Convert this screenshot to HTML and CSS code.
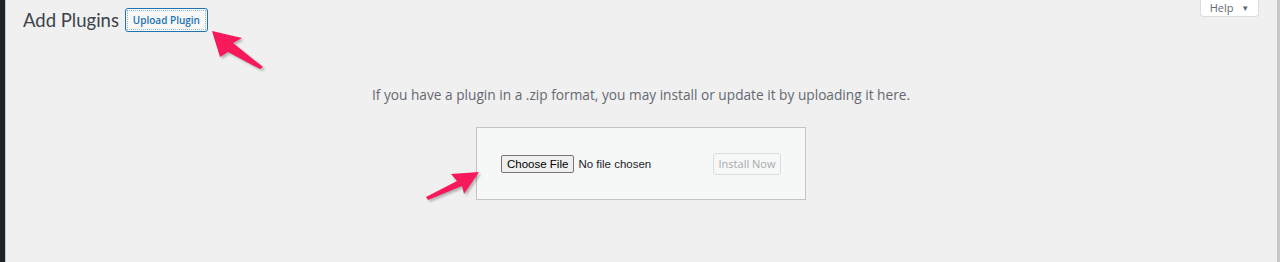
FILE: index.html
```html
<!DOCTYPE html>
<html lang="en">
<head>
    <meta charset="UTF-8">
    <meta name="viewport" content="width=device-width, initial-scale=1.0">
    <title>Add Plugins</title>
    <link rel="stylesheet" href="styles.css">
</head>
<body>

<div class="frame">
    <div class="sidebar"></div>

    <div class="main">
        <div class="top-bar">
            <div class="title-row">
                <h1>Add Plugins</h1>
                <button class="upload-btn">Upload Plugin</button>
            </div>
            <button class="help-tab">Help <span class="caret">&#9660;</span></button>
        </div>

        <div class="upload-plugin">
            <p class="install-help">If you have a plugin in a .zip format, you may install or update it by uploading it here.</p>
            <form class="upload-form">
                <input type="file" class="file-input">
                <button type="button" class="install-btn" disabled>Install Now</button>
            </form>
        </div>

        <!-- annotation arrows -->
        <svg class="arrow arrow-one" width="70" height="50" viewBox="0 0 70 50">
            <polygon class="arrow-shadow" points="2,1 32,8 23,13 53,37 50,39 18,22 10,27" transform="translate(2,2)"/>
            <polygon class="arrow-fill" points="2,1 32,8 23,13 53,37 50,39 18,22 10,27"/>
        </svg>
        <svg class="arrow arrow-two" width="60" height="36" viewBox="0 0 60 36">
            <polygon class="arrow-shadow" points="55,2 40,24 38,16 4,30 2,27 33,11 27,4" transform="translate(2,2)"/>
            <polygon class="arrow-fill" points="55,2 40,24 38,16 4,30 2,27 33,11 27,4"/>
        </svg>
    </div>

    <div class="scroll-edge"></div>
</div>

</body>
</html>
```

FILE: styles.css
```css
body {
    margin: 0;
    padding: 0;
    background-color: #f0f0f1;
    font-family: "Open Sans", "Noto Sans", sans-serif;
    color: #3c434a;
    overflow: hidden;
}
.frame {
    display: flex;
    height: 262px;
}
.sidebar {
    width: 5px;
    background-color: #1d2327;
    border-right: 1px solid #c3c4c7;
}
.scroll-edge {
    width: 3px;
    background-color: #c6c8cc;
}
.main {
    flex: 1;
    position: relative;
    padding: 0 18px 0 17px;
}
.top-bar {
    display: flex;
    justify-content: space-between;
    align-items: flex-start;
}
.title-row {
    display: flex;
    align-items: center;
    padding-top: 8px;
}
.title-row h1 {
    margin: 0;
    font-family: Lato, sans-serif;
    font-size: 18.5px;
    font-weight: 400;
    color: #3c434a;
    line-height: 24px;
}
.upload-btn {
    margin-left: 6px;
    height: 24px;
    width: 83px;
    padding: 0;
    border: 1px solid #2271b1;
    border-radius: 3px;
    background-color: #f6f7f7;
    color: #2271b1;
    font-family: "Open Sans", sans-serif;
    font-size: 10px;
    font-weight: 600;
    outline: 1px dotted #9ab8d3;
    outline-offset: -3px;
}
.help-tab {
    margin-top: -5px;
    width: 59px;
    height: 22px;
    padding: 4px 0 0 0;
    border: 1px solid #dcdcde;
    border-top: none;
    border-radius: 0 0 4px 4px;
    background-color: #fff;
    color: #646970;
    font-family: "Open Sans", sans-serif;
    font-size: 11px;
}
.caret {
    font-size: 8px;
    margin-left: 5px;
    vertical-align: 1px;
}
.upload-plugin {
    display: flex;
    flex-direction: column;
    align-items: center;
}
.install-help {
    margin: 54px 0 0;
    font-size: 13.7px;
    line-height: 18px;
    color: #646970;
}
.upload-form {
    margin-top: 23px;
    width: 280px;
    height: 71px;
    padding: 0 24px 0 24px;
    display: flex;
    justify-content: space-between;
    align-items: center;
    background-color: #f6f7f7;
    border: 1px solid #c3c4c7;
}
.file-input {
    width: 170px;
    font-family: "Liberation Sans", sans-serif;
    font-size: 11.5px;
    color: #1d2327;
}
.file-input::file-selector-button {
    font-family: "Liberation Sans", sans-serif;
    font-size: 11.5px;
    height: 18px;
    padding: 0 5px;
    margin-right: 4px;
    border: 1px solid #767676;
    border-radius: 2px;
    background-color: #efefef;
    color: #000;
}
.install-btn {
    flex-shrink: 0;
    white-space: nowrap;
    width: 68px;
    height: 22px;
    padding: 0;
    border: 1px solid #dcdcde;
    border-radius: 3px;
    background-color: #f6f7f7;
    color: #a7aaad;
    font-family: "Open Sans", sans-serif;
    font-size: 11px;
}
.arrow {
    position: absolute;
}
.arrow-one {
    left: 204px;
    top: 30px;
}
.arrow-two {
    left: 418px;
    top: 170px;
}
.arrow-fill {
    fill: #f7195a;
}
.arrow-shadow {
    fill: rgba(0, 0, 0, 0.25);
    filter: blur(1px);
}
```
